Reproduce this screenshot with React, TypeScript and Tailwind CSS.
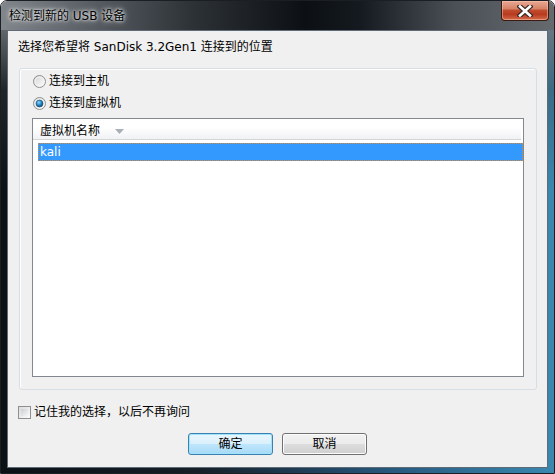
import React from "react";

const Radio = ({ checked }: { checked?: boolean }) => (
  <svg width="13" height="13" viewBox="0 0 13 13" className="shrink-0">
    <defs>
      <linearGradient id={checked ? "rbg1" : "rbg0"} x1="0" y1="0" x2="1" y2="1">
        <stop offset="0" stopColor="#d4d4d4" />
        <stop offset="1" stopColor="#ffffff" />
      </linearGradient>
      <radialGradient id="rdot" cx="0.4" cy="0.35" r="0.7">
        <stop offset="0" stopColor="#8fd8fb" />
        <stop offset="0.5" stopColor="#2a8ccb" />
        <stop offset="1" stopColor="#0c3f66" />
      </radialGradient>
    </defs>
    <circle cx="6.5" cy="6.5" r="6" fill={`url(#${checked ? "rbg1" : "rbg0"})`} stroke="#8e8f8f" />
    <circle cx="6.5" cy="6.5" r="4.5" fill="none" stroke="#f4f4f4" />
    {checked && <circle cx="6.5" cy="6.5" r="3.5" fill="url(#rdot)" stroke="#1d4f74" strokeWidth="0.6" />}
  </svg>
);

const RadioRow = ({ label, checked }: { label: string; checked?: boolean }) => (
  <div className="flex items-center h-[16px] gap-[3px]">
    <Radio checked={checked} />
    <span>{label}</span>
  </div>
);

const TitleBar = () => (
  <div className="relative h-[29px] bg-[linear-gradient(90deg,#80868b_0%,#62686d_12%,#2c3136_35%,#0c1014_55%,#141a1f_65%,#4a5055_82%,#646a6e_100%)]">
    <div className="absolute left-[8px] top-[7px] text-[12px] leading-[16px] text-black [text-shadow:0_0_6px_#ffffff,0_0_3px_#ffffff]">
      检测到新的 USB 设备
    </div>
    <div className="absolute left-[500px] top-0 w-[48px] h-[20px] rounded-b-[4px] border border-t-0 border-[#3b1a12] bg-[linear-gradient(180deg,#e9a894_0%,#d78469_40%,#c04b2e_50%,#b73a1f_70%,#d46c4c_100%)] flex items-center justify-center shadow-[inset_0_0_0_1px_rgba(255,210,190,0.45)]">
      <svg width="16" height="12" viewBox="0 0 16 12">
        <path d="M3 1.5 L13 10.5 M13 1.5 L3 10.5" stroke="#3a2a28" strokeWidth="5" strokeLinecap="square" />
        <path d="M3 1.5 L13 10.5 M13 1.5 L3 10.5" stroke="#ffffff" strokeWidth="2.6" strokeLinecap="square" />
      </svg>
    </div>
  </div>
);

const ListBox = () => (
  <div className="ml-[12px] mt-[7px] w-[492px] h-[259px] border border-[#828790] bg-white">
    <div className="h-[21px] flex items-center pl-[7px] pt-[4px] border-b border-[#d5d5d5] bg-[linear-gradient(180deg,#ffffff_0%,#ffffff_40%,#f1f2f4_100%)] mr-[2px]">
      <span>虚拟机名称</span>
      <svg width="9" height="5" viewBox="0 0 9 5" className="ml-[15px]">
        <path d="M0 0 L9 0 L4.5 5 Z" fill="#a9afb6" />
      </svg>
    </div>
    <div className="mt-[3px] ml-[5px] h-[18px] flex items-center pl-[2px] bg-[#3399ff] text-white outline-1 outline-dotted outline-[#e08a2c] -outline-offset-1">
      kali
    </div>
  </div>
);

export default function App() {
  return (
    <div className="w-[555px] h-[474px] overflow-hidden rounded-t-[7px] border border-[#1b1f23] text-[12px] leading-[16px] text-black font-['DejaVu_Sans','Noto_Sans_CJK_SC',sans-serif]">
      <TitleBar />
      <div className="h-[444px] px-[6px] pb-[6px] bg-[linear-gradient(180deg,rgba(110,116,120,0.85)_0px,rgba(60,66,70,0.4)_60px,transparent_160px),linear-gradient(90deg,#0c1116_0%,#161e26_35%,#27577c_70%,#3a88b0_100%)]">
        <div className="h-full border border-[#5d6c78] bg-[#f0f0f0] flex flex-col">
          <div className="pl-[10px] pt-[8px] h-[24px]">选择您希望将 SanDisk 3.2Gen1 连接到的位置</div>
          <div className="ml-[11px] mt-[13px] w-[518px] h-[322px] rounded-[3px] border border-[#d5dfe5] shadow-[inset_1px_1px_0_#ffffff]">
            <div className="pl-[13px] pt-[4px] flex flex-col gap-[6px]">
              <RadioRow label="连接到主机" />
              <RadioRow label="连接到虚拟机" checked />
            </div>
            <ListBox />
          </div>
          <div className="mt-[14px] pl-[10px] h-[16px] flex items-center gap-[3px]">
            <div className="w-[13px] h-[13px] border border-[#8e8f8f] bg-[linear-gradient(135deg,#dcdcdc,#fbfbfb)] p-[2px]">
              <div className="w-full h-full bg-[linear-gradient(135deg,#cbcfd5,#f6f6f6)]" />
            </div>
            <span>记住我的选择，以后不再询问</span>
          </div>
          <div className="mt-[13px] flex justify-center gap-[9px]">
            <button className="w-[85px] h-[22px] rounded-[3px] border border-[#3c7fb1] shadow-[inset_0_0_0_1px_#9ee4fb] bg-[linear-gradient(180deg,#eaf6fd_0%,#d9f0fc_50%,#bee6fd_52%,#a7d9f5_100%)] text-[12px]">
              确定
            </button>
            <button className="w-[85px] h-[22px] rounded-[3px] border border-[#707070] shadow-[inset_0_0_0_1px_#fcfcfc] bg-[linear-gradient(180deg,#f2f2f2_0%,#ebebeb_50%,#dddddd_52%,#cfcfcf_100%)] text-[12px]">
              取消
            </button>
          </div>
        </div>
      </div>
    </div>
  );
}
